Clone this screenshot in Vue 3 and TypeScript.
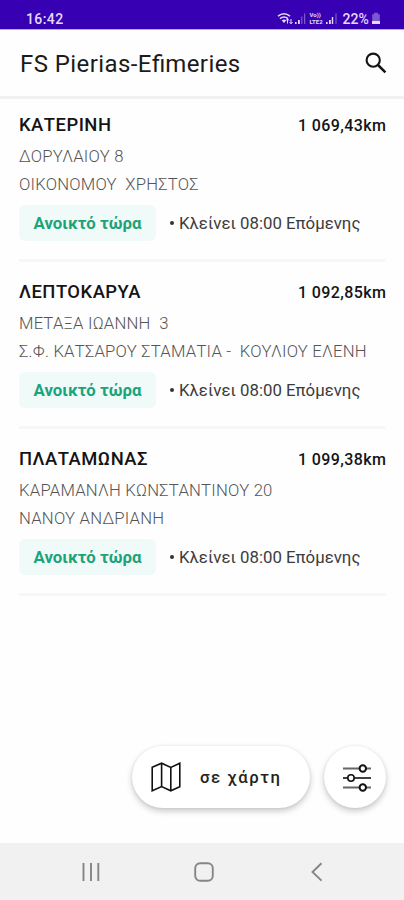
<script setup lang="ts">
interface Pharmacy {
  city: string
  distance: string
  address: string
  owner: string
}

const pharmacies: Pharmacy[] = [
  { city: 'ΚΑΤΕΡΙΝΗ', distance: '1 069,43km', address: 'ΔΟΡΥΛΑΙΟΥ 8', owner: 'ΟΙΚΟΝΟΜΟΥ  ΧΡΗΣΤΟΣ' },
  { city: 'ΛΕΠΤΟΚΑΡΥΑ', distance: '1 092,85km', address: 'ΜΕΤΑΞΑ ΙΩΑΝΝΗ  3', owner: 'Σ.Φ. ΚΑΤΣΑΡΟΥ ΣΤΑΜΑΤΙΑ -  ΚΟΥΛΙΟΥ ΕΛΕΝΗ' },
  { city: 'ΠΛΑΤΑΜΩΝΑΣ', distance: '1 099,38km', address: 'ΚΑΡΑΜΑΝΛΗ ΚΩΝΣΤΑΝΤΙΝΟΥ 20', owner: 'ΝΑΝΟΥ ΑΝΔΡΙΑΝΗ' },
]
</script>

<template>
  <div class="screen">
    <header class="status">
      <span class="clock">16:42</span>
      <div class="indicators">
        <svg class="wifi" width="17" height="14" viewBox="0 0 17 14" fill="none" stroke="currentColor">
          <path d="M1 4.2Q7 -.6 13 4.2M3 6.6Q7 3.4 11 6.6" stroke-width="1.6" />
          <path d="M4.8 8.4Q7 6.8 9.2 8.4L7 11Z" fill="currentColor" stroke="none" />
          <path d="M10.5 11.5V7M9 8.6l1.5-1.8L12 8.6M14 7v4.5M12.5 10l1.5 1.8 1.5-1.8" stroke-width="1" />
        </svg>
        <svg class="signal" width="13" height="14" viewBox="0 0 13 14" fill="currentColor">
          <path d="M1 10h1.6v2H1zM4 8h1.8v4H4z" />
          <path d="M7.2 4.5h1.2V12H7.2zM10 1.5h1.2V12H10z" opacity=".4" />
        </svg>
        <span class="volte"><span>Vo))</span><span>LTE2</span></span>
        <svg class="signal" width="13" height="14" viewBox="0 0 13 14" fill="currentColor">
          <path d="M1 10h1.6v2H1zM4 8h1.8v4H4zM6.8 5h1.4v7H6.8z" />
          <path d="M10.4 1.5h1.2V12h-1.2z" opacity=".4" />
        </svg>
        <span class="percent">22%</span>
        <svg class="battery" width="10" height="14" viewBox="0 0 10 14" fill="currentColor">
          <path d="M3 .8h4v1.4h1.8V9H1.2V2.2H3z" opacity=".4" />
          <path d="M1 9h8v3H1z" />
        </svg>
      </div>
    </header>

    <div class="appbar">
      <h1>FS Pierias-E<span class="ligature">fi</span>meries</h1>
      <svg width="22" height="22" viewBox="0 0 22 22" fill="none" stroke="#151515">
        <circle cx="8.2" cy="8.2" r="6.6" stroke-width="2.1" />
        <path d="M13 13l7.4 7.4" stroke-width="2.5" />
      </svg>
    </div>

    <main class="list">
      <article v-for="p in pharmacies" :key="p.city" class="item">
        <div class="top">
          <h2>{{ p.city }}</h2>
          <span class="distance">{{ p.distance }}</span>
        </div>
        <p class="line">{{ p.address }}</p>
        <p class="line">{{ p.owner }}</p>
        <div class="hours">
          <span class="badge">Ανοικτό τώρα</span>
          <span class="closing"><i class="dot"></i>Κλείνει 08:00 Επόμενης</span>
        </div>
      </article>
    </main>

    <div class="actions">
      <button class="fab map">
        <svg width="30" height="30" viewBox="0 0 30 30" fill="none" stroke="#111" stroke-width="1.6">
          <path d="M1.2 5.2L10.6 1.2 19.8 5.4 28.8 1.2V24.8L19.8 28.8 10.6 24.6 1.2 28.8Z" />
          <path d="M10.6 1.2V24.6M19.8 5.4V28.8" />
        </svg>
        <span>σε χάρτη</span>
      </button>
      <button class="fab filter">
        <svg width="30" height="30" viewBox="0 0 30 30" stroke="#111" fill="#fff">
          <path d="M1 5.5H29M1 24.5H29" stroke="#666" stroke-width="1.9" />
          <path d="M1 15H29" stroke-width="1.6" />
          <circle cx="20.8" cy="5.5" r="3.2" stroke-width="2" />
          <circle cx="9" cy="15" r="3.2" stroke-width="1.6" />
          <circle cx="20.8" cy="24.5" r="3.2" stroke-width="2" />
        </svg>
      </button>
    </div>

    <nav class="navbar">
      <svg width="20" height="20" viewBox="0 0 20 20" stroke="#858585" stroke-width="1.9" fill="none">
        <path d="M2.5 1v18M10 1v18M17.3 1v18" />
      </svg>
      <svg width="20" height="20" viewBox="0 0 20 20" stroke="#858585" stroke-width="1.9" fill="none">
        <rect x="1.2" y="1.2" width="17.6" height="17.6" rx="5" />
      </svg>
      <svg width="20" height="20" viewBox="0 0 20 20" stroke="#858585" stroke-width="1.9" fill="none">
        <path d="M14.5 1.2L5.5 10l9 8.6" />
      </svg>
    </nav>
  </div>
</template>

<style>
body {
  margin: 0;
}
</style>

<style scoped>
* {
  box-sizing: border-box;
}
.screen {
  width: 404px;
  height: 900px;
  display: flex;
  flex-direction: column;
  background: #fefefe;
  font-family: Roboto, "Noto Sans", sans-serif;
  overflow: hidden;
}
h1, h2, p {
  margin: 0;
}
svg {
  display: block;
  flex: none;
}
.status {
  height: 29px;
  flex: none;
  display: flex;
  justify-content: space-between;
  padding: 9px 23px 0 26px;
  background: #3800b3;
  color: #e4daf8;
}
.clock, .percent {
  font-size: 14px;
  line-height: 20px;
  font-weight: 500;
}
.clock {
  letter-spacing: 0.4px;
}
.indicators {
  display: flex;
  align-items: flex-start;
}
.indicators svg {
  margin-top: 3px;
}
.volte {
  display: flex;
  flex-direction: column;
  margin: 2px 1px 0 2px;
  width: 15px;
  font-size: 6px;
  line-height: 7px;
  font-weight: 700;
}
.percent {
  margin-left: 4px;
  letter-spacing: 0.1px;
}
.battery {
  margin-left: 2px;
}
.appbar {
  height: 70px;
  flex: none;
  display: flex;
  align-items: center;
  justify-content: space-between;
  padding: 0 17px 0 20px;
  border-top: 1px solid #b9a8e2;
  border-bottom: 3px solid #f1f1f1;
}
h1 {
  padding-top: 2px;
  font-size: 24px;
  line-height: 32px;
  font-weight: 400;
  letter-spacing: 0.42px;
  color: #1b1b1b;
}
.ligature {
  letter-spacing: 0;
}
.appbar svg {
  margin-bottom: 1px;
}
.list {
  flex: 1;
  padding: 0 18px 0 19px;
}
.item {
  height: 167px;
  padding-top: 14px;
  border-bottom: 3px solid #f7f7f7;
}
.item:first-child {
  height: 163px;
  padding-top: 10px;
}
.top {
  display: flex;
  justify-content: space-between;
  height: 34px;
  color: #141414;
}
h2 {
  font-size: 18.4px;
  font-weight: 500;
  line-height: 32px;
  letter-spacing: 0.5px;
}
.distance {
  margin-right: -0.4px;
  font-size: 16px;
  line-height: 34px;
  font-weight: 500;
  letter-spacing: 0.4px;
}
.line {
  white-space: pre;
  font-size: 16.7px;
  line-height: 27.5px;
  font-weight: 300;
  letter-spacing: 0.21px;
  color: #555;
}
.hours {
  display: flex;
  align-items: center;
  margin-top: 7px;
}
.badge {
  width: 137px;
  height: 36px;
  border-radius: 6px;
  background: #f0faf8;
  color: #1ba47b;
  text-align: center;
  font-size: 16.8px;
  line-height: 36px;
  font-weight: 700;
}
.closing {
  display: flex;
  align-items: center;
  margin-left: 14px;
  font-size: 16.8px;
  color: #3c3c3c;
}
.dot {
  width: 4px;
  height: 4px;
  margin-right: 5px;
  border-radius: 50%;
  background: #333;
}
.actions {
  display: flex;
  justify-content: flex-end;
  gap: 14px;
  padding: 0 18px 35px 0;
}
.fab {
  display: flex;
  align-items: center;
  height: 62px;
  padding: 0;
  border: 0;
  border-radius: 31px;
  background: #fff;
  box-shadow: 0 3px 6px rgba(0, 0, 0, 0.22), 0 0 3px rgba(0, 0, 0, 0.06);
  font-family: inherit;
}
.map {
  width: 178px;
  padding-left: 19px;
  gap: 19px;
  font-size: 16.7px;
  font-weight: 500;
  letter-spacing: 1.6px;
  color: #222;
}
.filter {
  width: 62px;
  padding: 1px 0 0 4px;
  justify-content: center;
}
.navbar {
  height: 57px;
  flex: none;
  display: flex;
  align-items: center;
  justify-content: space-between;
  padding: 1px 77px 0 81px;
  background: #f1f1f1;
}
</style>
